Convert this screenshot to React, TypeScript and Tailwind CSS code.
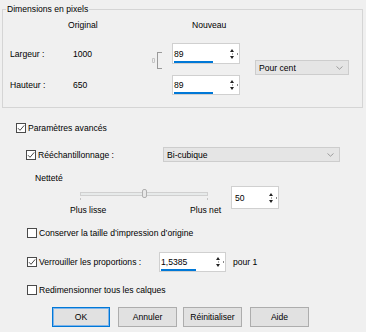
import React from "react";

const Check = ({ checked }: { checked?: boolean }) => (
    <svg width="10" height="10" viewBox="0 0 10 10" className="shrink-0">
        <rect x="0.5" y="0.5" width="9" height="9" fill="#fff" stroke="#4a4a4a" />
        {checked && <path d="M2 5.2 L4 7.3 L8.2 2.4" fill="none" stroke="#333" strokeWidth="0.9" />}
    </svg>
);

const Chevron = () => (
    <svg width="7" height="4" viewBox="0 0 7 4">
        <polyline points="0.5,0.5 3.5,3.2 6.5,0.5" fill="none" stroke="#8a8a8a" strokeWidth="0.8" />
    </svg>
);

const Arrows = () => (
    <div className="flex items-center pr-[1px]">
        <div className="flex flex-col items-center gap-[1px] w-[8px]">
            <div className="w-0 h-0 border-l-[2px] border-r-[2px] border-b-[3px] border-l-transparent border-r-transparent border-b-[#222]" />
            <div className="w-[1px] h-[2px] bg-[#aaa]" />
            <div className="w-0 h-0 border-l-[2px] border-r-[2px] border-t-[3px] border-l-transparent border-r-transparent border-t-[#222]" />
        </div>
        <div className="w-[1px] h-[2px] bg-[#888] ml-[1px]" />
    </div>
);

const SpinBox = ({ value, className, line }: { value: string; className: string; line?: string }) => (
    <div className={`relative flex bg-white border border-[#d0d0d0] ${className}`}>
        <span className="flex-1 flex items-center pl-[1px]">{value}</span>
        {line && <div className={`absolute bottom-0 left-[1px] h-[2px] bg-[#0078d7] ${line}`} />}
        <Arrows />
    </div>
);

const Combo = ({ label, className }: { label: string; className: string }) => (
    <div className={`flex items-center justify-between bg-[#e5e5e5] border border-[#cdcdcd] pl-[3px] pr-[5px] ${className}`}>
        <span>{label}</span>
        <Chevron />
    </div>
);

const Button = ({ label, className }: { label: string; className: string }) => (
    <div className={`flex items-center justify-center h-[20px] bg-[#e1e1e1] border ${className}`}>
        {label}
    </div>
);

export default function App() {
    return (
        <div className="w-[366px] h-[332px] overflow-hidden bg-[#f0f0f0] text-black text-[8.6px] leading-[10px] font-['Liberation_Sans',Arial,sans-serif]">
            {/* Dimensions */}
            <fieldset className="ml-[2px] mt-[4px] w-[361px] h-[104px] border border-[#d5d5d5]">
                <legend className="ml-[3px] px-[1px] leading-[10px]">Dimensions en pixels</legend>

                <div className="flex pl-[65px] mt-[6px]">
                    <span className="w-[124px]">Original</span>
                    <span>Nouveau</span>
                </div>

                <div className="flex pl-[7px] mt-[13px]">
                    <div className="flex flex-col gap-[11px] w-[63px]">
                        <div className="h-[21px] flex items-center">Largeur :</div>
                        <div className="h-[20px] flex items-center">Hauteur :</div>
                    </div>
                    <div className="flex flex-col gap-[11px] w-[77px]">
                        <div className="h-[21px] flex items-center">1000</div>
                        <div className="h-[20px] flex items-center">650</div>
                    </div>
                    <div className="flex items-center w-[22px] h-[17px] mt-[9px]">
                        <svg width="3" height="5" viewBox="0 0 3 5" className="ml-[2px]">
                            <rect x="0.4" y="0.4" width="2.2" height="4.2" rx="0.8" fill="none" stroke="#a8a8a8" strokeWidth="0.7" />
                        </svg>
                        <div className="ml-[2px] w-[5px] h-[17px] border-l border-t border-b border-[#9a9a9a]" />
                    </div>
                    <div className="flex flex-col gap-[11px] w-[68px]">
                        <SpinBox value="89" className="h-[21px]" line="w-[39px]" />
                        <SpinBox value="89" className="h-[20px]" line="w-[39px]" />
                    </div>
                    <Combo label="Pour cent" className="ml-[15px] mt-[17px] w-[94px] h-[15px]" />
                </div>
            </fieldset>

            {/* Paramètres avancés */}
            <div className="flex items-center h-[10px] mt-[15px] pl-[16px]">
                <Check checked />
                <span className="ml-[2px]">Paramètres avancés</span>
            </div>

            <div className="flex items-center h-[15px] mt-[14px] pl-[26px]">
                <Check checked />
                <span className="ml-[2px] w-[125px]">Rééchantillonnage :</span>
                <Combo label="Bi-cubique" className="w-[177px] h-[15px]" />
            </div>

            <div className="mt-[11px] pl-[35px]">Netteté</div>

            <div className="flex mt-[3px]">
                <div className="flex flex-col ml-[70px] w-[161px]">
                    <div className="relative ml-[10px] w-[128px] h-[10px] mt-[3px]">
                        <div className="mt-[3px] h-[4px] bg-[#e7eaea] border border-[#d0d0d0]" />
                        <div className="absolute left-[62px] top-0 w-[5px] h-[9px] rounded-[2px] bg-[#e8e8e8] border border-[#b0b0b0]" />
                        <div className="absolute left-0 top-[9px] w-[1px] h-[2px] bg-[#c4c4c4]" />
                        <div className="absolute right-0 top-[9px] w-[1px] h-[2px] bg-[#c4c4c4]" />
                    </div>
                    <div className="flex mt-[6px]">
                        <span className="w-[120px]">Plus lisse</span>
                        <span>Plus net</span>
                    </div>
                </div>
                <SpinBox value="50" className="w-[48px] h-[23px] pl-[2px]" />
            </div>

            <div className="flex items-center h-[10px] mt-[13px] pl-[27px]">
                <Check />
                <span className="ml-[2px]">Conserver la taille d’impression d’origine</span>
            </div>

            <div className="flex items-center h-[20px] mt-[14px] pl-[27px]">
                <Check checked />
                <span className="ml-[2px] w-[120px]">Verrouiller les proportions :</span>
                <SpinBox value="1,5385" className="w-[67px] h-[20px]" line="w-[35px]" />
                <span className="ml-[7px]">pour 1</span>
            </div>

            <div className="flex items-center h-[10px] mt-[13px] pl-[27px]">
                <Check />
                <span className="ml-[2px]">Redimensionner tous les calques</span>
            </div>

            <div className="flex mt-[12px] pl-[52px]">
                <Button label="OK" className="w-[58px] border-[#0078d7] shadow-[inset_0_0_0_1px_#7eb4ea]" />
                <Button label="Annuler" className="w-[59px] ml-[8px] border-[#adadad]" />
                <Button label="Réinitialiser" className="w-[59px] ml-[6px] border-[#adadad]" />
                <Button label="Aide" className="w-[59px] ml-[8px] border-[#adadad]" />
            </div>
        </div>
    );
}
